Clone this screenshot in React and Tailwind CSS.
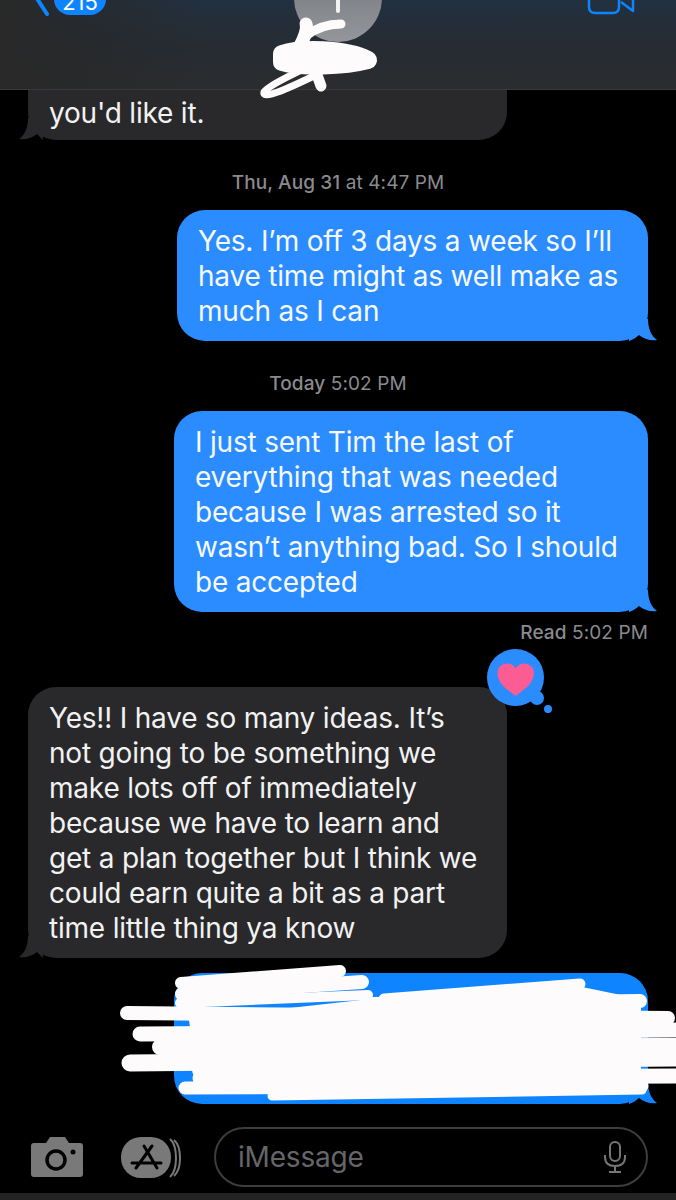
const font = { fontFamily: 'Inter, "Liberation Sans", sans-serif' }

const LeftTail = () => (
  <svg className="absolute bottom-0 left-[-9px]" width="24" height="22" viewBox="0 0 24 22">
    <path d="M9 0 C9 9 6 17 0 21 C7 22 13 20 18 16 L24 22 L24 0 Z" fill="#29292c" />
  </svg>
)

const RightTail = ({ fill }) => (
  <svg className="absolute bottom-0 right-[-9px]" width="28" height="22" viewBox="0 0 28 22">
    <path d="M19 0 C19 9 22 17 28 21 C21 22 15 20 10 16 C7 19 3 21 0 22 L0 0 Z" fill={fill} />
  </svg>
)

const Bubble = ({ lines, sent, className }) => (
  <div
    className={`relative rounded-[28px] pl-[21px] pt-[14px] pb-[12px] text-[28px] leading-[35px] tracking-[-0.2px] whitespace-nowrap ${
      sent ? 'self-end mr-[28px] bg-[#2a8cff] text-[#f6f9ff]' : 'ml-[28px] bg-[#29292c] text-[#f2f2f2]'
    } ${className}`}
  >
    {lines.map((l) => (
      <div key={l}>{l}</div>
    ))}
    {sent ? <RightTail fill="#2a8cff" /> : <LeftTail />}
  </div>
)

const Stamp = ({ day, time, className }) => (
  <div className={`text-center text-[19px] leading-[22px] tracking-[0.1px] text-[#8b8b8f] ${className}`}>
    <span className="font-medium">{day}</span> <span>{time}</span>
  </div>
)

const Header = () => (
  <div className="relative h-[90px] shrink-0 overflow-hidden border-b border-[#3a3a3c] bg-gradient-to-b from-[#22303f] via-[#262c33] to-[#2b2c2e]">
    <div className="absolute inset-y-0 left-0 w-[200px] bg-gradient-to-r from-[#282828] to-transparent" />
    <svg className="absolute left-[26px] top-0" width="26" height="20" viewBox="0 0 26 20">
      <path d="M8 -6 L21 14" stroke="#0f84ff" strokeWidth="4" strokeLinecap="round" fill="none" />
    </svg>
    <div className="absolute left-[54px] top-[-20px] flex h-[35px] w-[52px] items-end justify-center rounded-[16px] bg-[#0f84ff] text-[22px] leading-[26px] text-white">
      215
    </div>
    <div className="absolute left-[294px] top-[-46px] flex h-[88px] w-[88px] items-start justify-center rounded-full bg-gradient-to-b from-[#6e7277] to-[#94969b]">
      <div className="mt-[40px] h-[19px] w-[4px] rounded-sm bg-[#f2f2f2]" />
    </div>
    <svg className="absolute left-[586px] top-0" width="50" height="16" viewBox="0 0 50 16" fill="none">
      <path d="M3 -4 V7 Q3 13 9 13 H27 Q33 13 33 7 V-4" stroke="#0f84ff" strokeWidth="2.5" />
      <path d="M35 2 L47 11 V-4" stroke="#0f84ff" strokeWidth="2.5" strokeLinejoin="round" />
    </svg>
  </div>
)

const Reaction = () => (
  <svg className="absolute left-[459px] top-[5px]" width="100" height="76" viewBox="459 649 100 76">
    <circle cx="515.5" cy="677.5" r="28.5" fill="#2a8cff" />
    <circle cx="537" cy="698" r="7" fill="#2a8cff" />
    <circle cx="548" cy="709" r="4" fill="#2a8cff" />
    <path
      d="M515.5 696 C506 689 497.5 683 497.5 673 C497.5 667 502 663.5 507 663.5 C511 663.5 514 665.5 515.5 668.5 C517 665.5 520 663.5 524 663.5 C529 663.5 534 667 534 673 C534 683 525 689 515.5 696 Z"
      fill="#fb5c93"
    />
  </svg>
)

const Composer = () => (
  <div className="flex items-start pl-[31px] pt-[23px]">
    <svg width="52" height="40" viewBox="0 0 52 40" className="mt-[10px] shrink-0">
      <path
        d="M3 6 H15 L19 0 H34 L38 6 H49 Q52 6 52 9 V37 Q52 40 49 40 H3 Q0 40 0 37 V9 Q0 6 3 6 Z"
        fill="#797979"
      />
      <circle cx="25" cy="23" r="9" fill="none" stroke="#000" strokeWidth="3.5" />
      <circle cx="42" cy="15" r="2.5" fill="#000" />
    </svg>
    <svg width="64" height="42" viewBox="0 0 64 42" className="ml-[38px] mt-[10px] shrink-0">
      <path d="M49 2 C57 9 57 33 49 40" stroke="#797979" strokeWidth="2" fill="none" />
      <path d="M53 3 C61 10 61 32 53 39" stroke="#797979" strokeWidth="2" fill="none" />
      <rect x="0" y="0" width="50" height="41" rx="20" fill="#797979" />
      <path d="M23 9 L36 31 M31 9 L15 31 M11 26 H40" stroke="#000" strokeWidth="3" strokeLinecap="round" fill="none" />
    </svg>
    <div className="ml-[29px] flex h-[60px] w-[434px] shrink-0 items-center justify-between rounded-[30px] border-2 border-[#3d3d3f] pl-[22px] pr-[20px]">
      <span className="text-[28px] tracking-[-0.2px] text-[#666668]">iMessage</span>
      <svg width="22" height="32" viewBox="0 0 22 32" fill="none" stroke="#767676" strokeWidth="2">
        <rect x="6" y="1" width="10" height="19" rx="5" />
        <path d="M1 14 V16 Q1 25 11 25 Q21 25 21 16 V14 M11 25 V31 M5 31 H17" />
      </svg>
    </div>
  </div>
)

// the white marker scribbles drawn over the screenshot
const TopScribble = () => (
  <svg className="absolute left-0 top-0" width="676" height="110" viewBox="0 0 676 110" fill="none" stroke="#fdfbfc" strokeLinecap="round" strokeLinejoin="round">
    <path d="M306 24 C308 30 304 38 300 46" strokeWidth="13" />
    <path d="M306 36 C316 28 328 24 341 24" strokeWidth="9" />
    <path d="M282 54 C300 48 345 48 368 60 C345 66 300 68 282 62 Z" strokeWidth="18" fill="#fdfbfc" />
    <path d="M305 68 C295 74 270 84 264 92 C262 100 285 90 318 74" strokeWidth="7" />
    <path d="M316 72 L321 86" strokeWidth="11" />
  </svg>
)

const BottomScribble = () => (
  <svg className="absolute left-0 top-[960px]" width="676" height="150" viewBox="0 960 676 150" fill="none" stroke="#fdfbfc" strokeLinecap="round" strokeLinejoin="round">
    <path d="M181 983 L340 971" strokeWidth="12" />
    <path d="M182 994 L362 982" strokeWidth="14" />
    <path d="M180 1003 L368 995" strokeWidth="10" />
    <path d="M384 999 L580 984" strokeWidth="11" />
    <path d="M370 1004 L640 1001" strokeWidth="14" />
    <path d="M127 1013 L668 1018" strokeWidth="14" />
    <path d="M140 1034 L676 1030" strokeWidth="15" />
    <path d="M160 1047 L676 1046" strokeWidth="16" />
    <path d="M130 1063 L676 1058" strokeWidth="17" />
    <path d="M200 1078 L676 1076" strokeWidth="15" />
    <path d="M185 1088 L642 1086" strokeWidth="13" />
    <path d="M272 1096 L642 1090" strokeWidth="9" />
    <path d="M200 1025 L620 1024 M170 1040 L620 1040 M200 1070 L620 1070" strokeWidth="16" />
    <path d="M370 1000 L582 988 L640 1000 L640 1085 L200 1088 L190 1020 Z" fill="#fdfbfc" strokeWidth="2" />
  </svg>
)

export default function App() {
  return (
    <div className="relative flex h-[1200px] w-[676px] flex-col overflow-hidden bg-black" style={font}>
      <Header />
      <Bubble className="w-[479px] rounded-t-none !pt-[6px] !pb-[9px]" lines={["you'd like it."]} />
      <Stamp className="mt-[32px]" day="Thu, Aug 31" time="at 4:47 PM" />
      <Bubble
        sent
        className="mt-[16px] w-[471px]"
        lines={['Yes. I’m off 3 days a week so I’ll', 'have time might as well make as', 'much as I can']}
      />
      <Stamp className="mt-[32px]" day="Today" time="5:02 PM" />
      <Bubble
        sent
        className="mt-[16px] w-[474px]"
        lines={[
          'I just sent Tim the last of',
          'everything that was needed',
          'because I was arrested so it',
          'wasn’t anything bad. So I should',
          'be accepted',
        ]}
      />
      <div className="mr-[28px] mt-[10px] text-right text-[19px] leading-[22px] tracking-[0.1px] text-[#8b8b8f]">
        <span className="font-medium">Read</span> 5:02 PM
      </div>
      <div className="relative">
        <Bubble
          className="mt-[43px] w-[479px]"
          lines={[
            'Yes!! I have so many ideas. It’s',
            'not going to be something we',
            'make lots off of immediately',
            'because we have to learn and',
            'get a plan together but I think we',
            'could earn quite a bit as a part',
            'time little thing ya know',
          ]}
        />
        <Reaction />
      </div>
      <div className="relative mr-[28px] mt-[15px] h-[131px] w-[474px] self-end rounded-[28px] bg-[#0f84ff]">
        <RightTail fill="#0f84ff" />
      </div>
      <Composer />
      <div className="absolute bottom-0 left-0 h-[7px] w-full bg-[#232323]" />
      <TopScribble />
      <BottomScribble />
    </div>
  )
}
